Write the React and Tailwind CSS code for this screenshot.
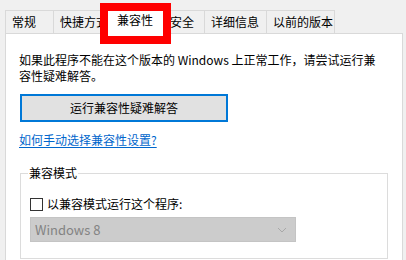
const font = { fontFamily: '"Noto Sans CJK SC", "Noto Sans", sans-serif' };

function Tab({ label, width, first }) {
  return (
    <div
      className={`h-[23px] ${first ? "" : "-ml-px"} border border-b-0 border-[#d9d9d9] bg-[#f0f0f0] pl-[6px] text-[12px] leading-[22px] text-black whitespace-nowrap overflow-hidden`}
      style={{ width }}
    >
      {label}
    </div>
  );
}

export default function App() {
  return (
    <div
      className="relative w-[406px] h-[260px] overflow-hidden bg-[#f0f0f0] text-[12px] text-black"
      style={font}
    >
      {/* tab strip */}
      <div className="flex items-end h-[33px] pl-[5px]">
        <Tab label="常规" width={49} first />
        <Tab label="快捷方式" width={55} />
        <div className="relative z-10 -ml-[3px] -mr-[2px] mb-[-1px] h-[28px] w-[61px] border border-b-0 border-[#d9d9d9] bg-white pl-[11px] pt-[3px] leading-[20px] whitespace-nowrap">
          兼容性
          <div className="absolute -left-[6px] -top-[4px] h-[41px] w-[71px] border-[8px] border-[#ff0000]" />
        </div>
        <Tab label="安全" width={42} />
        <Tab label="详细信息" width={63} />
        <Tab label="以前的版本" width={69} />
      </div>

      {/* page */}
      <div className="ml-[5px] w-[398px] h-[240px] border border-[#d9d9d9] bg-white pl-[13px] pt-[18px]">
        <p className="leading-[16px] whitespace-nowrap">
          如果此程序不能在这个版本的 Windows 上正常工作，请尝试运行兼
          <br />
          容性疑难解答。
        </p>

        <button
          type="button"
          className="mt-[10px] ml-px flex h-[28px] w-[208px] items-center justify-center border-2 border-[#0078d7] bg-[#e1e1e1] text-[12px] leading-[16px]"
        >
          运行兼容性疑难解答
        </button>

        <div className="mt-[10px] leading-[16px]">
          <span className="text-[#0066cc] underline underline-offset-2">如何手动选择兼容性设置?</span>
        </div>

        <fieldset className="mt-[17px] ml-px w-[368px] border border-[#dcdcdc] pl-[9px] pb-[16px]">
          <legend className="ml-[-2px] px-[1px] leading-[16px]">兼容模式</legend>

          <div className="mt-[15px] flex h-[16px] items-center gap-[4px]">
            <span className="h-[13px] w-[13px] border border-[#333333] bg-white" />
            <span className="leading-[16px]">以兼容模式运行这个程序:</span>
          </div>

          <div className="mt-[5px] flex h-[25px] w-[266px] items-center justify-between border border-[#c4c4c4] bg-[#cccccc] pl-[4px] pr-[8px] text-[#838383]">
            <span className="text-[13px] leading-[16px]">Windows 8</span>
            <svg width="10" height="6" viewBox="0 0 10 6" fill="none" stroke="#a8a8a8" strokeWidth="1">
              <path d="M1 1 L5 5 L9 1" />
            </svg>
          </div>
        </fieldset>
      </div>
    </div>
  );
}
